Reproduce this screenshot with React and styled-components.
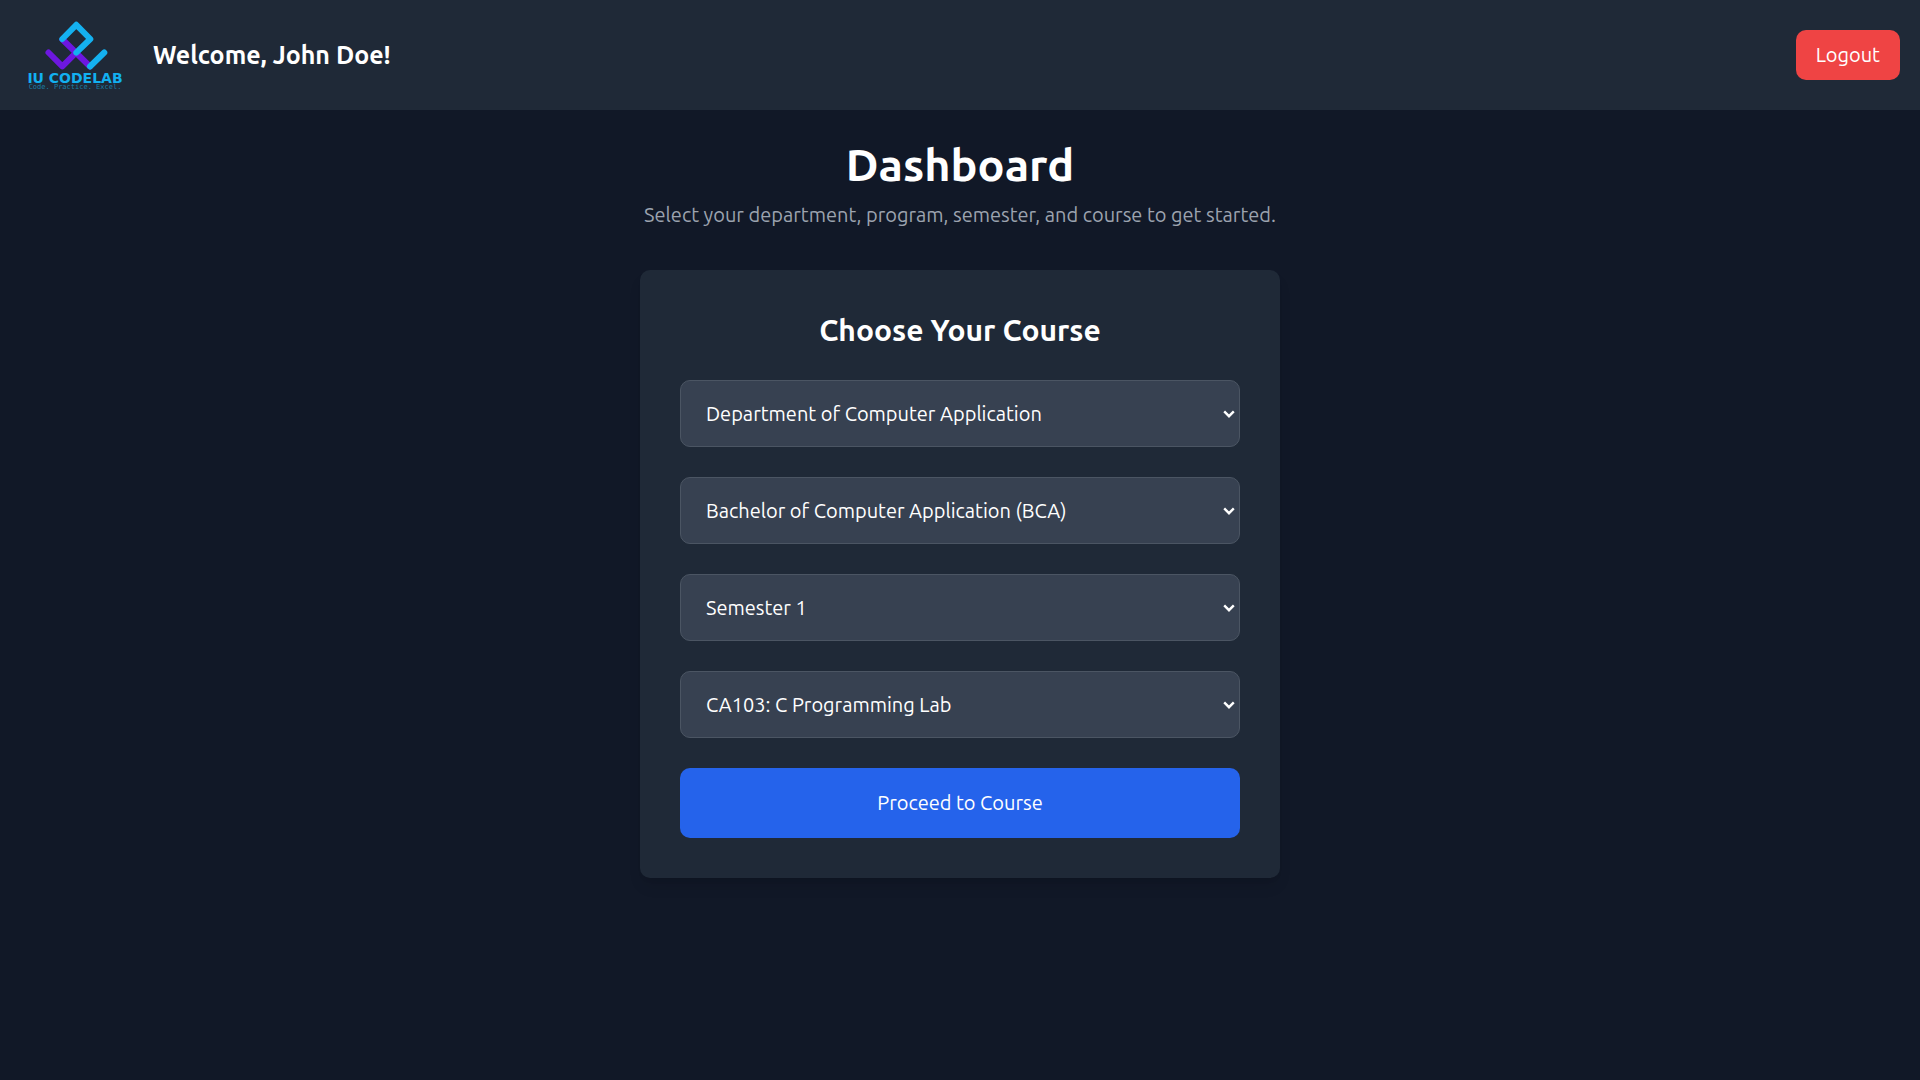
import React, { useState } from "react";
import styled, { createGlobalStyle } from "styled-components";

const GlobalStyle = createGlobalStyle`
  *, *::before, *::after { box-sizing: border-box; }
  body {
    margin: 0;
    background: #111827;
    color: #ffffff;
    font-family: Ubuntu, "Open Sans", "Noto Sans", sans-serif;
    font-size: 20px;
    font-weight: 400;
    line-height: 30px;
  }
  h1, h2, p { margin: 0; }
`;

const Page = styled.div`
  min-height: 100vh;
  background: #111827;
`;

const Header = styled.header`
  display: flex;
  align-items: center;
  justify-content: space-between;
  padding: 20px;
  background: #1f2937;
`;

const Brand = styled.div`
  display: flex;
  align-items: center;
  gap: 20px;
`;

const LogoArt = styled.svg`
  display: block;
  width: 113px;
  height: 70px;
`;

const Wordmark = styled.text`
  font-family: "DejaVu Sans", sans-serif;
  font-size: 14px;
  font-weight: 700;
  fill: #12b0f0;
`;

const Tagline = styled.text`
  font-family: "DejaVu Sans Mono", monospace;
  font-size: 7px;
  font-weight: 400;
  fill: #1a7ea6;
`;

const Welcome = styled.h2`
  font-size: 25px;
  font-weight: 600;
  line-height: 35px;
`;

const Button = styled.button`
  border: 0;
  border-radius: 10px;
  padding: ${(p) => (p.$large ? "20px" : "10px 20px")};
  width: ${(p) => (p.$large ? "100%" : "auto")};
  background: ${(p) => (p.$large ? "#2563eb" : "#ef4444")};
  color: #ffffff;
  font: inherit;
  cursor: pointer;
`;

const Main = styled.main`
  display: flex;
  flex-direction: column;
  align-items: center;
  padding: 30px 20px;
`;

const Title = styled.h1`
  font-size: 45px;
  font-weight: 600;
  line-height: 50px;
`;

const Subtitle = styled.p`
  margin-top: 10px;
  color: #9ca3af;
`;

const Card = styled.form`
  display: flex;
  flex-direction: column;
  gap: 30px;
  width: 100%;
  max-width: 640px;
  margin-top: 40px;
  padding: 40px;
  border-radius: 10px;
  background: #1f2937;
  box-shadow: 0 10px 15px -3px rgba(0, 0, 0, 0.1), 0 4px 6px -4px rgba(0, 0, 0, 0.1);
`;

const CardTitle = styled.h2`
  font-size: 30px;
  font-weight: 600;
  line-height: 40px;
  text-align: center;
`;

const SelectBox = styled.div`
  display: grid;
  align-items: center;
  > * { grid-area: 1 / 1; }
`;

const Select = styled.select`
  appearance: none;
  width: 100%;
  height: 67px;
  padding: 0 25px;
  border: 1px solid #4b5563;
  border-radius: 10px;
  background: #374151;
  color: #ffffff;
  font: inherit;
`;

const Chevron = styled.svg`
  justify-self: end;
  width: 12px;
  height: 8px;
  margin-right: 5px;
  pointer-events: none;
`;

const fields = [
  { name: "department", label: "Department", option: "Department of Computer Application" },
  { name: "program", label: "Program", option: "Bachelor of Computer Application (BCA)" },
  { name: "semester", label: "Semester", option: "Semester 1" },
  { name: "course", label: "Course", option: "CA103: C Programming Lab" },
];

function Logo() {
  return (
    <LogoArt viewBox="0 0 113 70" role="img" aria-label="IU CodeLab">
      <g fill="none" strokeWidth="6" strokeLinecap="round" strokeLinejoin="round">
        <path stroke="#6d17e0" d="M28.5 32.5 42.3 46.3 56.3 32.3M42.5 19.5 70 46.5" />
        <path stroke="#14b1f0" d="M42.3 19 56.3 4.8 70.3 19 56.3 32.6M84.3 32.5 70 46.5" />
      </g>
      <Wordmark x="55" y="63" textAnchor="middle">IU CODELAB</Wordmark>
      <Tagline x="55" y="69" textAnchor="middle">Code. Practice. Excel.</Tagline>
    </LogoArt>
  );
}

function Field({ name, label, option }) {
  const [value, setValue] = useState(option);
  return (
    <SelectBox>
      <Select
        id={name}
        name={name}
        aria-label={label}
        value={value}
        onChange={(e) => setValue(e.target.value)}
      >
        <option value={option}>{option}</option>
      </Select>
      <Chevron viewBox="0 0 12 8" aria-hidden="true">
        <path d="M1.2 1.4 6 6.2 10.8 1.4" fill="none" stroke="#ffffff" strokeWidth="2.4" />
      </Chevron>
    </SelectBox>
  );
}

export default function App() {
  return (
    <Page>
      <GlobalStyle />
      <Header>
        <Brand>
          <Logo />
          <Welcome>Welcome, John Doe!</Welcome>
        </Brand>
        <Button type="button">Logout</Button>
      </Header>
      <Main>
        <Title>Dashboard</Title>
        <Subtitle>Select your department, program, semester, and course to get started.</Subtitle>
        <Card onSubmit={(e) => e.preventDefault()}>
          <CardTitle>Choose Your Course</CardTitle>
          {fields.map((field) => (
            <Field key={field.name} {...field} />
          ))}
          <Button type="submit" $large>Proceed to Course</Button>
        </Card>
      </Main>
    </Page>
  );
}
